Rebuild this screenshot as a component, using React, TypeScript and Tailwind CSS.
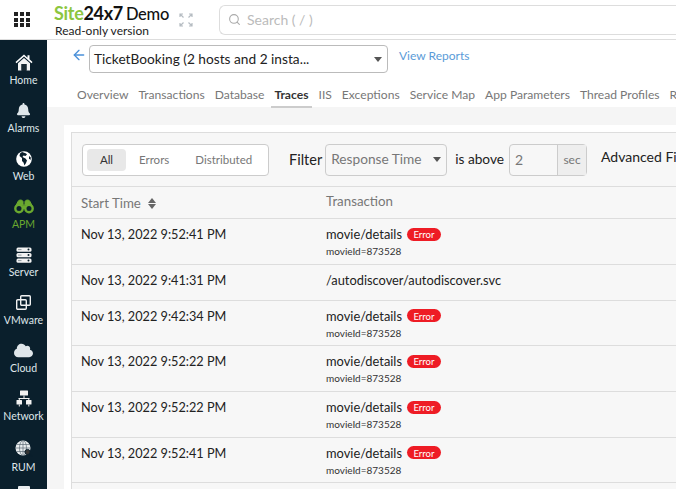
import { ArrowLeft, Search } from "lucide-react";
import { FaBell, FaCloud } from "react-icons/fa";

function HomeIcon() {
  return (
    <svg width="18" height="17" viewBox="0 0 18 17">
      <path d="M9 .5 .5 8l1 1.200L9 2.600l7.500 6.600 1-1.200-3-2.700V1.200h-2v2.500Z" fill="#fff" />
      <path d="M3 9.300 9 4l6 5.300V16.500h-3.500V10h-5v6.500H3Z" fill="#f4f4f4" />
      <rect x="6.500" y="10" width="5" height="6.500" fill="#1b2a33" />
    </svg>
  );
}

function GlobeIcon() {
  return (
    <svg width="16" height="16" viewBox="0 0 16 16">
      <circle cx="8" cy="8" r="7.800" fill="#fff" />
      <path d="M6 1c2 .6 4 1 5 2.500L9.500 5l-2-.5-1 1.500 3 1.500 1.500 2-1 2.500-1.500 2.500-1-3-1.500-1.500L6 7 3.500 5 4 2.500Z" fill="#0a1f2c" />
      <path d="M13 5l1.800 1.500L14.500 9 13 7.500Z" fill="#0a1f2c" />
    </svg>
  );
}

function BinocularsIcon() {
  return (
    <svg width="20" height="15" viewBox="0 0 20 15" fill="none" stroke="#6aa82f">
      <circle cx="5" cy="9.500" r="3.700" strokeWidth="2.400" />
      <circle cx="15" cy="9.500" r="3.700" strokeWidth="2.400" />
      <path d="M2 6.500 4 2.500Q4.500 1 6.500 1T9 2.500V6h2V2.500Q11.500 1 13.500 1T16 2.500l2 4" fill="#6aa82f" strokeWidth="1" />
      <rect x="8.500" y="6.500" width="3" height="3.500" fill="#6aa82f" stroke="none" />
    </svg>
  );
}

function ServerIcon() {
  return (
    <svg width="16" height="16" viewBox="0 0 16 16">
      {[0.5, 6, 11.5].map((y) => (
        <g key={y}>
          <rect x="0.500" y={y} width="15" height="4.200" rx="1.500" fill="#f2f2f2" />
          <rect x="2" y={y + 1.6} width="3.500" height="1" fill="#8d979d" />
          <circle cx="12.500" cy={y + 2.1} r="1" fill="#0a1f2c" />
        </g>
      ))}
    </svg>
  );
}

function VmwareIcon() {
  return (
    <svg width="15" height="15" viewBox="0 0 15 15" fill="none" stroke="#f2f2f2" strokeWidth="1.400">
      <rect x="4.700" y="0.700" width="9.600" height="9.600" rx="1" />
      <rect x="0.700" y="4.700" width="9.600" height="9.600" rx="1" />
    </svg>
  );
}

function NetworkIcon() {
  return (
    <svg width="16" height="17" viewBox="0 0 16 17" fill="#f2f2f2">
      <rect x="4" y="0.500" width="8" height="5" rx="0.500" />
      <rect x="7.500" y="5.500" width="1" height="3" />
      <rect x="2.500" y="8" width="11" height="1" />
      <rect x="0.500" y="10" width="5.500" height="4.500" rx="0.500" />
      <rect x="10" y="10" width="5.500" height="4.500" rx="0.500" />
      <rect x="2.800" y="14.500" width="1" height="2" />
      <rect x="12.300" y="14.500" width="1" height="2" />
      <rect x="2.800" y="8.500" width="1" height="2" />
      <rect x="12.300" y="8.500" width="1" height="2" />
    </svg>
  );
}

function RumIcon() {
  return (
    <svg width="18" height="17" viewBox="0 0 18 17" fill="none">
      <circle cx="8" cy="8" r="7.500" fill="#e8ecee" />
      <g stroke="#5d6c75" strokeWidth="0.700">
        <ellipse cx="8" cy="8" rx="3.500" ry="7.500" />
        <path d="M8 .5v15M.5 8h15M1.500 4.500h13M1.500 11.500h13" />
      </g>
      <circle cx="12.500" cy="12" r="2.600" fill="#333" stroke="#0a1f2c" />
      <path d="M14.500 14 17 16.500" stroke="#0a1f2c" strokeWidth="1.200" />
    </svg>
  );
}

const navItems = [
  { label: "Home", icon: <HomeIcon /> },
  { label: "Alarms", icon: <FaBell size={15} /> },
  { label: "Web", icon: <GlobeIcon /> },
  { label: "APM", icon: <BinocularsIcon />, active: true },
  { label: "Server", icon: <ServerIcon /> },
  { label: "VMware", icon: <VmwareIcon /> },
  { label: "Cloud", icon: <FaCloud size={19} /> },
  { label: "Network", icon: <NetworkIcon /> },
  { label: "RUM", icon: <RumIcon /> },
];

const tabs = [
  "Overview",
  "Transactions",
  "Database",
  "Traces",
  "IIS",
  "Exceptions",
  "Service Map",
  "App Parameters",
  "Thread Profiles",
  "Reports",
];

const rows = [
  { time: "Nov 13, 2022 9:52:41 PM", name: "movie/details", error: true },
  { time: "Nov 13, 2022 9:41:31 PM", name: "/autodiscover/autodiscover.svc", error: false },
  { time: "Nov 13, 2022 9:42:34 PM", name: "movie/details", error: true },
  { time: "Nov 13, 2022 9:52:22 PM", name: "movie/details", error: true },
  { time: "Nov 13, 2022 9:52:22 PM", name: "movie/details", error: true },
  { time: "Nov 13, 2022 9:52:41 PM", name: "movie/details", error: true },
];

function Caret() {
  return <span className="h-0 w-0 border-x-[4px] border-t-[5px] border-x-transparent border-t-[#555]" />;
}

function ExpandIcon() {
  return (
    <svg width="14" height="14" viewBox="0 0 14 14" fill="none" stroke="#b5bcc2" strokeWidth="1.2" className="shrink-0">
      <path d="M1 4V1h3M1 1l3.500 3.500M10 1h3v3M13 1L9.500 4.500M1 10v3h3M1 13l3.500-3.500M10 13h3v-3M13 13L9.500 9.500" />
    </svg>
  );
}

export default function App() {
  return (
    <div className="flex h-[489px] w-[676px] flex-col overflow-hidden bg-white font-['Lato','Open_Sans',sans-serif]">
      {/* top bar */}
      <header className="flex h-10 shrink-0 items-center border-b border-[#ddd]">
        <div className="ml-[14px] grid w-4 shrink-0 grid-cols-3 gap-[1.5px]">
          {Array.from({ length: 9 }).map((_, i) => (
            <span key={i} className="h-1 w-1 bg-[#222]" />
          ))}
        </div>
        <div className="ml-6 flex w-[125px] shrink-0 flex-col">
          <div className="flex items-baseline text-[18px] leading-[20px] tracking-[-0.3px]">
            <span className="font-bold text-[#8cc63f]">Site</span>
            <span className="font-bold text-[#111]">24x7</span>
            <span className="ml-[3px] text-[16.500px] font-medium text-[#111]">Demo</span>
          </div>
          <span className="pl-[1px] text-[12px] leading-[13px] text-[#222]">Read-only version</span>
        </div>
        <ExpandIcon />
        <div className="ml-[26px] flex h-[30px] flex-1 items-center rounded-l-md border border-r-0 border-[#ddd] pl-2">
          <Search size={13} className="text-[#aaa]" />
          <span className="ml-[6px] text-[14px] text-[#bbb]">Search ( / )</span>
        </div>
      </header>

      <div className="flex min-h-0 flex-1">
        {/* side nav */}
        <nav className="flex w-[47px] shrink-0 flex-col items-center overflow-hidden bg-[#0a1f2c] pt-[12px]">
          {navItems.map((item) => (
            <div
              key={item.label}
              className={`flex h-12 w-full shrink-0 flex-col items-center ${
                item.active ? "text-[#6aa82f]" : "text-[#dfe6ea]"
              } ${item.label === "RUM" ? "pt-[2px]" : ""}`}
            >
              <span className="flex h-[21px] items-center">{item.icon}</span>
              <span className={`text-[10.500px] leading-[13px] ${item.label === "RUM" ? "mt-[2px]" : "mt-[1px]"}`}>
                {item.label}
              </span>
            </div>
          ))}
          <div className="mt-[2px] h-3 w-3 shrink-0 rounded-[1px] bg-[#e8ecee]" />
        </nav>

        <main className="flex min-w-0 flex-1 flex-col overflow-hidden">
          {/* monitor picker */}
          <div className="flex h-[67px] shrink-0 flex-col">
            <div className="flex items-start pl-[24px] pt-[5px]">
              <ArrowLeft size={16} className="mt-[2px] text-[#4a90d9]" />
              <div className="ml-[2px] flex h-[28px] w-[299px] items-center justify-between rounded-sm border border-[#bbb] pl-[4px] pr-[5px]">
                <span className="pt-[1px] text-[13.700px] text-[#222]">TicketBooking (2 hosts and 2 insta...</span>
                <Caret />
              </div>
              <span className="ml-[11px] mt-[2px] text-[12px] text-[#5a9bd8]">View Reports</span>
            </div>
            <div className="mt-[12px] flex gap-[10px] whitespace-nowrap pl-[30px] text-[12.100px] leading-[20px] text-[#777]">
              {tabs.map((tab) => (
                <span
                  key={tab}
                  className={
                    tab === "Traces"
                      ? "relative font-bold text-[#333] after:absolute after:-inset-x-[3px] after:-bottom-[3px] after:h-[2px] after:bg-[#ccc]"
                      : ""
                  }
                >
                  {tab}
                </span>
              ))}
            </div>
          </div>

          {/* content */}
          <div className="min-h-0 flex-1 bg-[#f5f5f5] pl-[17px] pt-[18px]">
            <div className="h-full bg-white pl-[7px] pt-[7px]">
              <div className="h-full border-l border-t border-[#ddd] bg-[#f7f7f7]">
                <div className="flex h-[54px] items-center whitespace-nowrap border-b border-[#ddd] pl-[10px]">
                  <div className="flex h-8 w-[187px] shrink-0 items-center rounded-sm border border-[#ccc] bg-white pl-[4px] text-[11.500px] text-[#777]">
                    <span className="flex h-[22px] w-[39px] items-center justify-center rounded-sm bg-[#e8e8e8] text-[#333]">
                      All
                    </span>
                    <span className="ml-[13px]">Errors</span>
                    <span className="ml-[26px]">Distributed</span>
                  </div>
                  <span className="ml-5 shrink-0 text-[14.500px] text-[#222]">Filter</span>
                  <div className="ml-[3px] flex h-8 w-[122px] shrink-0 items-center justify-between rounded-sm border border-[#ccc] pl-[5px] pr-[5px] text-[13.700px] text-[#777]">
                    Response Time
                    <Caret />
                  </div>
                  <span className="ml-2 shrink-0 text-[13.700px] text-[#222]">is above</span>
                  <div className="ml-[5px] flex h-8 w-[78px] shrink-0 rounded-sm border border-[#ccc]">
                    <span className="flex w-[47px] items-center pl-[5px] text-[14px] text-[#777]">2</span>
                    <span className="flex flex-1 items-center justify-center border-l border-[#ccc] bg-[#eee] text-[12px] text-[#777]">
                      sec
                    </span>
                  </div>
                  <span className="mb-[6px] ml-[14px] shrink-0 text-[14px] text-[#222]">Advanced Filter</span>
                </div>

                <div className="flex h-8 border-b border-[#ddd] pl-[9px] text-[13.300px] text-[#777]">
                  <span className="flex w-[245px] items-center pt-[3px]">
                    Start Time
                    <span className="mb-[2px] ml-[7px] flex flex-col gap-[1px]">
                      <span className="h-0 w-0 border-x-[4.500px] border-b-[5px] border-x-transparent border-b-[#666]" />
                      <span className="h-0 w-0 border-x-[4.500px] border-t-[5px] border-x-transparent border-t-[#666]" />
                    </span>
                  </span>
                  <span className="pt-[5px]">Transaction</span>
                </div>

                {rows.map((row, i) => (
                  <div
                    key={i}
                    className={`flex border-b border-[#ddd] pl-[9px] pt-[6px] text-[#222] ${
                      row.error ? "h-[45.700px]" : "h-[36px]"
                    }`}
                  >
                    <span className="w-[245px] text-[12.700px] leading-[18px]">{row.time}</span>
                    <div>
                      <div className="flex items-center text-[12.850px] leading-[18px]">
                        {row.name}
                        {row.error && (
                          <span className="ml-[5px] flex h-[13px] w-[34px] items-center justify-center rounded-[7px] bg-[#ee1c25] pt-[2px] text-[9.500px] text-white">
                            Error
                          </span>
                        )}
                      </div>
                      {row.error && (
                        <div className="mt-[1px] text-[10px] leading-[14px] text-[#333]">movieId=873528</div>
                      )}
                    </div>
                  </div>
                ))}
              </div>
            </div>
          </div>
        </main>
      </div>
    </div>
  );
}
